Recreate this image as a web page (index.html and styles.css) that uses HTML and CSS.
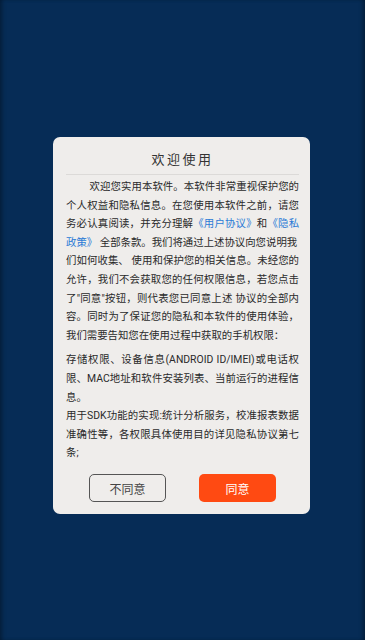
FILE: index.html
```html
<!DOCTYPE html>
<html lang="zh-CN">
<head>
<meta charset="utf-8">
<title>欢迎使用</title>
<link rel="stylesheet" href="styles.css">
</head>
<body>
<div class="screen">
  <div class="dialog">
    <div class="title">欢迎使用</div>
    <div class="content">
      <p class="para indent">欢迎您实用本软件。本软件非常重视保护您的个人权益和隐私信息。在您使用本软件之前，请您务必认真阅读，并充分理解<span class="link">《用户协议》</span>和<span class="link">《隐私政策》</span> 全部条款。我们将通过上述协议向您说明我<br>们如何收集、 使用和保护您的相关信息。未经您的允许，我们不会获取您的任何权限信息，若您点击了"同意"按钮，则代表您已同意上述 协议的全部内容。同时为了保证您的隐私和本软件的使用体验，我们需要告知您在使用过程中获取的手机权限：</p>
      <p class="para second">存储权限、设备信息(ANDROID ID/IMEI)或电话权限、MAC地址和软件安装列表、当前运行的进程信息。<br>用于SDK功能的实现:统计分析服务，校准报表数据准确性等，各权限具体使用目的详见隐私协议第七条;</p>
    </div>
    <div class="actions">
      <button class="btn btn-cancel">不同意</button>
      <button class="btn btn-ok">同意</button>
    </div>
  </div>
</div>
</body>
</html>
```

FILE: styles.css
```css
* { box-sizing: border-box; }
html, body { margin: 0; padding: 0; }
body {
  width: 365px;
  height: 640px;
  background: #062c56;
  font-family: Roboto, "Noto Sans CJK SC", sans-serif;
  overflow: hidden;
}
.screen {
  height: 640px;
  padding: 137px 55px 0 53px;
  box-shadow: inset 4px 0 4px -2px rgba(0,0,0,0.35), inset -4px 0 4px -2px rgba(0,0,0,0.35);
}
.dialog {
  width: 257px;
  height: 377px;
  background: #efedeb;
  border-radius: 7px;
  padding: 0 11px 12px 13px;
  display: flex;
  flex-direction: column;
}
.title {
  flex: none;
  height: 38px;
  padding-top: 14px;
  text-align: center;
  font-size: 13px;
  line-height: 18px;
  letter-spacing: 2.5px;
  color: #333;
  border-bottom: 1px solid #dcdad8;
}
.content {
  padding-top: 3px;
  color: #2a2a2a;
  font-size: 10.4px;
  line-height: 18.6px;
  flex: 1;
}
.para { margin: 0; text-align: justify; }
.indent { text-indent: 23.5px; }
.second { margin-top: 6px; }
.link { color: #2b7bd6; }
.actions {
  flex: none;
  display: flex;
  justify-content: space-between;
  padding: 0 23px;
}
.btn {
  width: 77px;
  height: 28px;
  border-radius: 5px;
  font-family: inherit;
  font-size: 12px;
  padding: 0;
}
.btn-cancel {
  background: transparent;
  border: 1px solid #555;
  color: #444;
}
.btn-ok {
  background: #ff4a12;
  border: none;
  color: #fff;
}
```
